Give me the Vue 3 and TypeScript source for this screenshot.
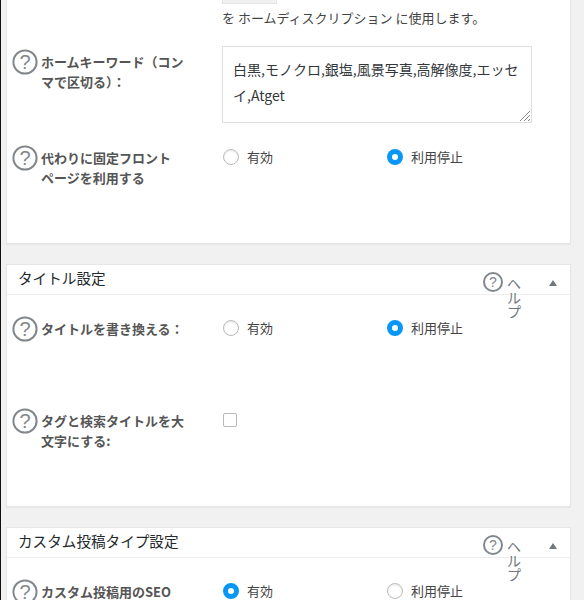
<script setup lang="ts">
interface Field {
  label: string
  kind: 'radio' | 'check' | 'keywords'
  on?: boolean
  height: number
}

interface Section {
  title?: string
  fields: Field[]
}

const sections: Section[] = [
  {
    fields: [
      { label: 'ホームキーワード（コン\nマで区切る）：', kind: 'keywords', height: 96 },
      { label: '代わりに固定フロント\nページを利用する', kind: 'radio', on: false, height: 98 },
    ],
  },
  {
    title: 'タイトル設定',
    fields: [
      { label: 'タイトルを書き換える：', kind: 'radio', on: false, height: 92 },
      { label: 'タグと検索タイトルを大\n文字にする:', kind: 'check', height: 98 },
    ],
  },
  {
    title: 'カスタム投稿タイプ設定',
    fields: [{ label: 'カスタム投稿用のSEO', kind: 'radio', on: true, height: 60 }],
  },
]
</script>

<template>
  <div class="page">
    <section v-for="(s, i) in sections" :key="i" class="box" :class="{ first: !s.title }">
      <header v-if="s.title" class="head">
        <h2>{{ s.title }}</h2>
        <span class="help">
          <svg class="q small" viewBox="0 0 20 20"><circle cx="10" cy="10" r="9" /><text x="10" y="15">?</text></svg>
          <span class="help-text">ヘルプ</span>
        </span>
        <span class="toggle"></span>
      </header>
      <div class="body" :class="{ titled: s.title }">
        <p v-if="!s.title" class="note">
          <span class="stub"></span>
          を ホームディスクリプション に使用します。
        </p>
        <div v-for="f in s.fields" :key="f.label" class="row" :style="{ height: f.height + 'px' }">
          <div class="label">
            <svg class="q" viewBox="0 0 26 26"><circle cx="13" cy="13" r="11.6" /><text x="13" y="20">?</text></svg>
            <span>{{ f.label }}</span>
          </div>
          <div class="control">
            <div v-if="f.kind === 'keywords'" class="area">
              白黒,モノクロ,銀塩,風景写真,高解像度,エッセイ,Atget
              <svg class="grip" viewBox="0 0 12 12"><path d="M1 11 11 1M5 11 11 5M9 11 11 9" /></svg>
            </div>
            <template v-else-if="f.kind === 'radio'">
              <label class="opt"><i class="radio" :class="{ on: f.on }"></i>有効</label>
              <label class="opt"><i class="radio" :class="{ on: !f.on }"></i>利用停止</label>
            </template>
            <i v-else class="check"></i>
          </div>
        </div>
      </div>
    </section>
  </div>
</template>

<style>
html,
body {
  margin: 0;
  background: #f1f1f1;
}
</style>

<style scoped>
.page {
  height: 600px;
  overflow: hidden;
  padding: 0 13px 0 6px;
  border-left: 1px solid #111;
  box-sizing: border-box;
  font-family: "Noto Sans CJK JP", "Liberation Sans", sans-serif;
  color: #444;
  font-size: 13px;
}

.box {
  background: #fff;
  border: 1px solid #e5e5e5;
  box-shadow: 0 1px 1px rgba(0, 0, 0, 0.04);
  margin-bottom: 20px;
  margin-left: -1px;
}

.box.first {
  border-top: 0;
}

.head {
  height: 29px;
  display: flex;
  align-items: center;
  border-bottom: 1px solid #eee;
  padding-left: 11px;
  position: relative;
}

.head h2 {
  margin: 0 0 4px;
  flex: 1;
  font-size: 14.6px;
  font-weight: 400;
  color: #23282d;
}

.help {
  position: absolute;
  left: 476px;
  top: 7px;
  display: flex;
  gap: 4px;
}

.help-text {
  width: 14px;
  margin-top: 4px;
  line-height: 14px;
  font-size: 14px;
  color: #72777c;
}

.toggle {
  width: 0;
  height: 0;
  margin: 7px 13px 0 0;
  border-left: 4px solid transparent;
  border-right: 4px solid transparent;
  border-bottom: 6px solid #72777c;
}

.body {
  padding-left: 5px;
}

.body.titled {
  padding-top: 21px;
}

.note {
  margin: 0;
  padding-left: 210px;
  height: 49px;
  line-height: 20px;
  box-sizing: border-box;
}

.stub {
  display: block;
  width: 53px;
  height: 3px;
  background: #f1f1f1;
  border: 1px solid #e5e5e5;
  border-top: 0;
  margin-bottom: 4px;
}

.row {
  display: flex;
}

.label {
  width: 211px;
  display: flex;
  gap: 3px;
  font-weight: 700;
  line-height: 20px;
  flex-shrink: 0;
  color: #555;
  white-space: pre-line;
}

.label span {
  padding-top: 3px;
}

.q {
  width: 26px;
  height: 26px;
  flex-shrink: 0;
}

.q.small {
  width: 20px;
  height: 20px;
}

.q circle {
  fill: #fff;
  stroke: #82878c;
  stroke-width: 2;
}

.q text {
  font-family: "Liberation Sans", sans-serif;
  font-size: 20px;
  font-weight: 400;
  fill: #82878c;
  text-anchor: middle;
}

.q.small text {
  font-size: 14px;
}

.control {
  display: flex;
  flex: 1;
  align-items: flex-start;
}

.area {
  width: 310px;
  height: 77px;
  margin: -3px 0 0 -1px;
  box-sizing: border-box;
  border: 1px solid #ddd;
  padding: 9px 10px;
  font-size: 14px;
  line-height: 26px;
  color: #32373c;
  position: relative;
}

.grip {
  position: absolute;
  right: 0;
  bottom: 0;
  width: 12px;
  height: 12px;
}

.grip path {
  stroke: #888;
  fill: none;
}

.opt {
  width: 164px;
  margin-top: 2px;
  display: flex;
  align-items: center;
  gap: 8px;
  line-height: 20px;
}

.radio {
  width: 16px;
  height: 16px;
  box-sizing: border-box;
  border-radius: 50%;
  border: 1px solid #bbb;
  box-shadow: inset 0 1px 2px rgba(0, 0, 0, 0.1);
}

.radio.on {
  border: 5px solid #0a96f5;
  box-shadow: none;
  background: #fff;
}

.check {
  width: 14px;
  height: 14px;
  box-sizing: border-box;
  border: 1px solid #bbb;
  border-radius: 2px;
  margin-top: 5px;
}
</style>
